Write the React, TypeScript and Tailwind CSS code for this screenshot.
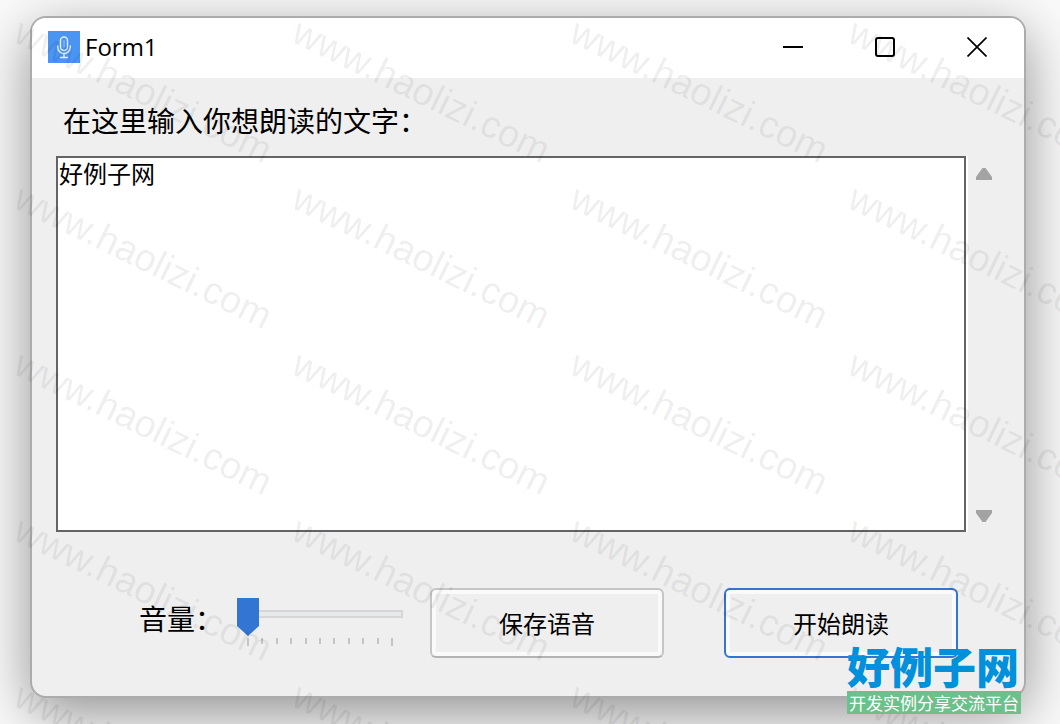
import React, { useState } from 'react';

const TICKS = Array.from({ length: 11 }, (_, i) => i);
const MARKS = Array.from({ length: 20 }, (_, i) => i);

function MicIcon() {
  return (
    <svg viewBox="0 0 32 32" className="h-8 w-8" fill="none" aria-hidden="true">
      <rect width="32" height="32" fill="#4a94f2" />
      <g stroke="#e4effd" strokeWidth="1.4" strokeLinecap="round">
        <rect x="12.5" y="6" width="7" height="13.5" rx="3.5" />
        <path d="M16 9.5v6.5" strokeWidth="1" opacity="0.5" />
        <path d="M9.7 15v1.2a6.3 6.3 0 0 0 12.6 0V15M16 22.5v4M12.5 26.5h7" />
      </g>
    </svg>
  );
}

function TitleBar() {
  const button = 'flex h-full w-[92px] items-center justify-center';
  return (
    <header className="flex h-[60px] items-center bg-white pr-px pb-[3px] pl-4">
      <MicIcon />
      <h1 className="ml-[5px] flex-1 font-['Open_Sans',sans-serif] text-[24px] leading-8">Form1</h1>
      <button className={button} aria-label="Minimize">
        <svg width="20" height="20" viewBox="0 0 20 20" stroke="#000" strokeWidth="2">
          <path d="M0 10h20" />
        </svg>
      </button>
      <button className={button} aria-label="Maximize">
        <svg width="20" height="20" viewBox="0 0 20 20" fill="none" stroke="#000" strokeWidth="2">
          <rect x="1" y="1" width="18" height="18" rx="2" />
        </svg>
      </button>
      <button className={button} aria-label="Close">
        <svg width="20" height="20" viewBox="0 0 20 20" stroke="#000" strokeWidth="1.7">
          <path d="M0.5 0.5l19 19M19.5 0.5l-19 19" />
        </svg>
      </button>
    </header>
  );
}

function ScrollButtons() {
  return (
    <div className="flex w-[34px] flex-col items-center justify-between border-l-2 border-white pt-[10px] pb-2">
      <button aria-label="Scroll up">
        <svg width="16" height="16" viewBox="0 0 16 16" fill="#a3a3a3">
          <path d="M6.5 2h3L16 11v3H0v-3z" />
        </svg>
      </button>
      <button aria-label="Scroll down">
        <svg width="16" height="16" viewBox="0 0 16 16" fill="#a3a3a3">
          <path d="M6.5 14h3L16 5V2H0v3z" />
        </svg>
      </button>
    </div>
  );
}

function VolumeSlider() {
  const [volume, setVolume] = useState(0);
  return (
    <div className="flex items-start">
      <label htmlFor="volume" className="mt-4 w-[98px] text-[28px] leading-7">
        音量：
      </label>
      <div className="mt-[10px] w-[166px]">
        <input
          id="volume"
          type="range"
          min={0}
          max={10}
          value={volume}
          onChange={(e) => setVolume(Number(e.target.value))}
          className="block h-8 w-full appearance-none bg-transparent [&::-webkit-slider-runnable-track]:h-2 [&::-webkit-slider-runnable-track]:bg-[#e7eaea] [&::-webkit-slider-runnable-track]:shadow-[inset_0_0_0_2px_#d6d6d6] [&::-webkit-slider-thumb]:-mt-3 [&::-webkit-slider-thumb]:h-[38px] [&::-webkit-slider-thumb]:w-[22px] [&::-webkit-slider-thumb]:appearance-none [&::-webkit-slider-thumb]:bg-[#3275d2] [&::-webkit-slider-thumb]:[clip-path:polygon(0_0,100%_0,100%_74%,50%_100%,0_74%)]"
        />
        <div className="mt-2 flex justify-between px-[10px]">
          {TICKS.map((t) => (
            <span key={t} className="h-[6px] w-[2px] bg-[#c4c4c4] first:h-2 last:h-2" />
          ))}
        </div>
      </div>
    </div>
  );
}

function Watermark() {
  return (
    <div
      className="pointer-events-none absolute inset-0 grid auto-rows-[166px] grid-cols-[repeat(4,278px)] overflow-hidden pl-[26px] pt-[11px]"
      aria-hidden="true"
    >
      {MARKS.map((m) => (
        <span
          key={m}
          className="h-10 w-[284px] origin-top-left rotate-[26deg] font-['Liberation_Sans',sans-serif] text-[38px] leading-10 text-black/8"
        >
          www.haolizi.com
        </span>
      ))}
    </div>
  );
}

function SiteLogo() {
  return (
    <div className="pointer-events-none absolute right-[39px] bottom-[10px] w-[174px] font-['Noto_Sans_CJK_SC',sans-serif]">
      <p className="mb-[3px] text-[43px] leading-[46px] font-black whitespace-nowrap text-[#0090dc]">好例子网</p>
      <p className="bg-[#6cc08b] text-center text-[17px] leading-[23px] whitespace-nowrap text-white">
        开发实例分享交流平台
      </p>
    </div>
  );
}

export default function App() {
  const [text, setText] = useState('好例子网');

  return (
    <div className="relative min-h-screen overflow-hidden bg-[#fafafa] pt-4 pr-[34px] pb-[26px] pl-[30px] font-['Noto_Sans_CJK_SC',sans-serif] text-black">
      <main className="overflow-hidden rounded-2xl border-2 border-[#acacac] bg-[#efefef] shadow-[0_16px_56px_rgba(0,0,0,0.42)]">
        <TitleBar />
        <div className="px-6 pt-7 pb-[38px]">
          <label htmlFor="content" className="mb-[22px] ml-[7px] block text-[28px] leading-7">
            在这里输入你想朗读的文字：
          </label>
          <div className="flex">
            <textarea
              id="content"
              value={text}
              onChange={(e) => setText(e.target.value)}
              className="h-[376px] min-w-0 flex-1 resize-none border-2 border-[#646466] bg-white px-px py-px text-[24px] leading-7 outline-none"
            />
            <ScrollButtons />
          </div>
          <div className="mt-14 flex items-start pl-[83px]">
            <VolumeSlider />
            <button className="ml-[27px] h-[70px] w-[234px] rounded-md border-2 border-[#c6c6c6] border-b-[#b3b3b3] text-[24px] shadow-[inset_0_0_0_4px_#fafafa]">
              保存语音
            </button>
            <button className="ml-[60px] h-[70px] w-[234px] rounded-md border-2 border-[#3275d2] text-[24px] shadow-[inset_0_0_0_4px_#fafafa]">
              开始朗读
            </button>
          </div>
        </div>
      </main>
      <Watermark />
      <SiteLogo />
    </div>
  );
}
